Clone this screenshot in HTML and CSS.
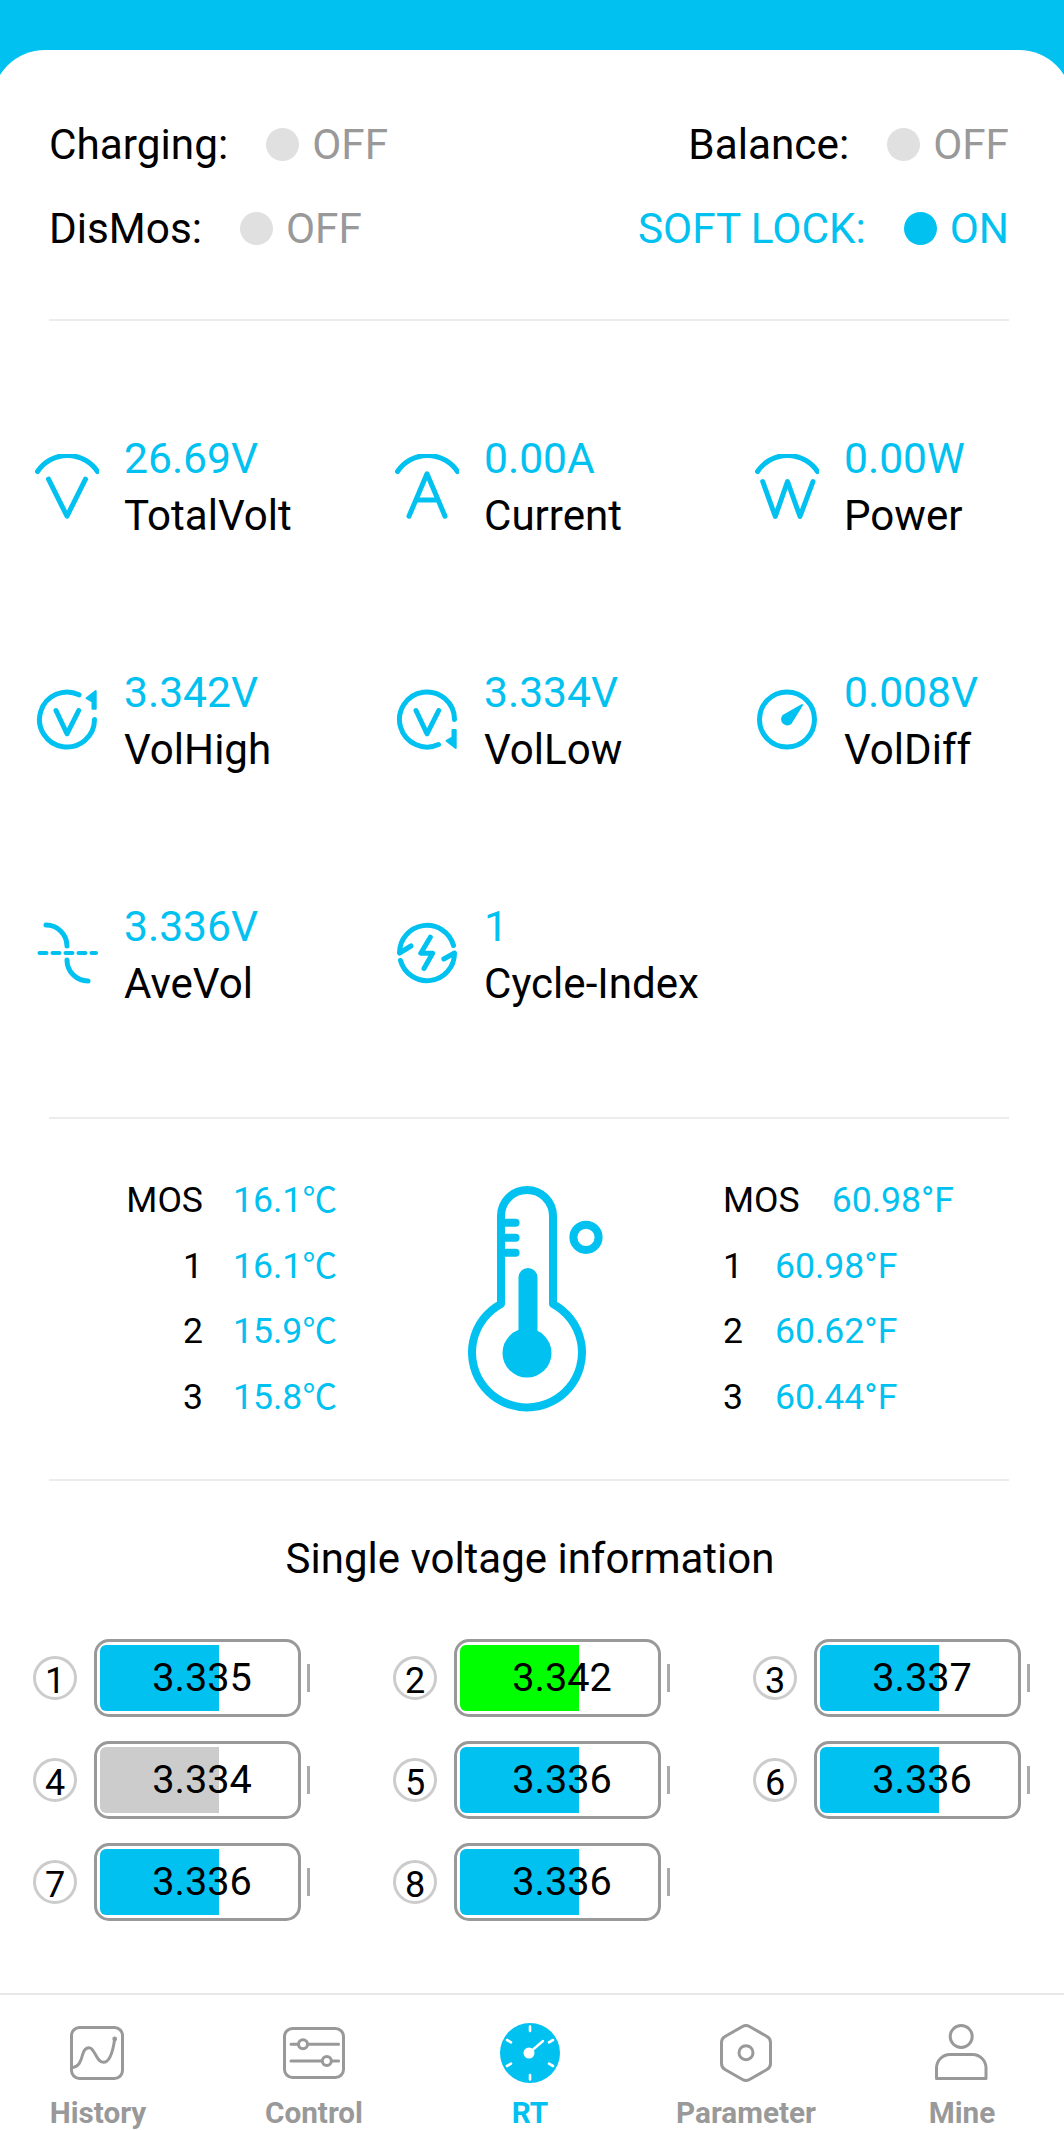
FILE: index.html
```html
<!DOCTYPE html>
<html lang="en">
<head>
    <meta charset="UTF-8">
    <meta name="viewport" content="width=device-width, initial-scale=1.0">
    <title>RT</title>
    <link rel="stylesheet" href="styles.css">
</head>
<body>
<div class="page">
    <div class="top-bar"></div>
    <div class="card">

        <!-- status flags -->
        <section class="status">
            <div class="status-row">
                <div class="flag"><span>Charging:</span><i class="dot"></i><span class="off">OFF</span></div>
                <div class="flag"><span>Balance:</span><i class="dot"></i><span class="off">OFF</span></div>
            </div>
            <div class="status-row">
                <div class="flag"><span>DisMos:</span><i class="dot"></i><span class="off">OFF</span></div>
                <div class="flag on"><span>SOFT LOCK:</span><i class="dot"></i><span>ON</span></div>
            </div>
        </section>

        <!-- main readings -->
        <section class="metrics">
            <div class="metric">
                <svg class="metric-icon" viewBox="0 0 64 66"><path d="M2.5 17.5A36 36 0 0 1 62.5 17.5"/><path d="M13.5 25.2L32 62.2L50.5 25.2"/></svg>
                <div><div class="val">26.69V</div><div class="name">TotalVolt</div></div>
            </div>
            <div class="metric">
                <svg class="metric-icon" viewBox="0 0 64 66"><path d="M2.5 17.5A36 36 0 0 1 62.5 17.5"/><path d="M14 62.2L32 19.8L50 62.2M21 46H43"/></svg>
                <div><div class="val">0.00A</div><div class="name">Current</div></div>
            </div>
            <div class="metric">
                <svg class="metric-icon" viewBox="0 0 64 66"><path d="M2.5 17.5A36 36 0 0 1 62.5 17.5"/><path d="M7.7 27.5L20.3 62.5L32.5 27.5L45 62.5L58 27.5"/></svg>
                <div><div class="val">0.00W</div><div class="name">Power</div></div>
            </div>
            <div class="metric">
                <svg class="metric-icon" viewBox="0 0 64 66"><path d="M44 6.8A27.5 27.5 0 1 0 59.5 31.5"/><path class="solid" d="M51.5 10.2L60.7 3V20.8H57.5V13.5Z"/><path d="M21 22.5L32 45.8L43.7 22.5"/></svg>
                <div><div class="val">3.342V</div><div class="name">VolHigh</div></div>
            </div>
            <div class="metric">
                <svg class="metric-icon" viewBox="0 0 64 66"><path d="M59.5 31.5A27.5 27.5 0 1 0 43.5 56.5"/><path class="solid" d="M51.5 52.8L60.7 60V42H57.5V49.5Z"/><path d="M21 22.5L32 45.8L43.7 22.5"/></svg>
                <div><div class="val">3.334V</div><div class="name">VolLow</div></div>
            </div>
            <div class="metric">
                <svg class="metric-icon" viewBox="0 0 64 66"><circle cx="32" cy="31.5" r="27.5"/><path class="solid" d="M47 17L35.7 35.2A5.3 5.3 0 0 1 28.2 27.8Z"/></svg>
                <div><div class="val">0.008V</div><div class="name">VolDiff</div></div>
            </div>
            <div class="metric">
                <svg class="metric-icon" viewBox="0 0 64 66"><path d="M11 3A21 21 0 0 1 32 24"/><path class="dash" d="M4.5 31H61"/><path d="M32 38A21 21 0 0 0 53 59"/></svg>
                <div><div class="val">3.336V</div><div class="name">AveVol</div></div>
            </div>
            <div class="metric">
                <svg class="metric-icon" viewBox="0 0 64 66"><path d="M16 24L4.5 31A27.5 27.5 0 0 1 58.5 23.5"/><path d="M48.8 37L59.5 31A27.5 27.5 0 0 1 5.5 38.5"/><path d="M35.3 15.2L25.8 31.2H37.6L29 46.5"/></svg>
                <div><div class="val">1</div><div class="name">Cycle-Index</div></div>
            </div>
        </section>

        <!-- temperatures -->
        <section class="temps">
            <div class="temp-c">
                <span class="t-label">MOS</span><span class="val-t">16.1<span class="deg">℃</span></span>
                <span class="t-label">1</span><span class="val-t">16.1<span class="deg">℃</span></span>
                <span class="t-label">2</span><span class="val-t">15.9<span class="deg">℃</span></span>
                <span class="t-label">3</span><span class="val-t">15.8<span class="deg">℃</span></span>
            </div>
            <svg class="thermo" viewBox="0 0 135 226">
                <path d="M33 118V30A26 26 0 0 1 85 30V118A55 55 0 1 1 33 118Z"/>
                <path d="M33 36.7H47.6M33 51.7H47.6M33 66.7H47.6"/>
                <circle cx="118" cy="51.3" r="12.6"/>
                <rect class="solid" x="50.5" y="82" width="19" height="85" rx="9.5"/>
                <circle class="solid" cx="59" cy="167" r="24.5"/>
            </svg>
            <div class="temp-f">
                <div class="t-row"><span>MOS</span><span class="val-t">60.98°F</span></div>
                <div class="t-row"><span>1</span><span class="val-t">60.98°F</span></div>
                <div class="t-row"><span>2</span><span class="val-t">60.62°F</span></div>
                <div class="t-row"><span>3</span><span class="val-t">60.44°F</span></div>
            </div>
        </section>

        <!-- cell voltages -->
        <section class="cells">
            <h2>Single voltage information</h2>
            <div class="cell-grid">
                <div class="cell"><span class="num">1</span><div class="batt"><i class="fill"></i><span>3.335</span></div><i class="tip"></i></div>
                <div class="cell"><span class="num">2</span><div class="batt"><i class="fill high"></i><span>3.342</span></div><i class="tip"></i></div>
                <div class="cell"><span class="num">3</span><div class="batt"><i class="fill"></i><span>3.337</span></div><i class="tip"></i></div>
                <div class="cell"><span class="num">4</span><div class="batt"><i class="fill low"></i><span>3.334</span></div><i class="tip"></i></div>
                <div class="cell"><span class="num">5</span><div class="batt"><i class="fill"></i><span>3.336</span></div><i class="tip"></i></div>
                <div class="cell"><span class="num">6</span><div class="batt"><i class="fill"></i><span>3.336</span></div><i class="tip"></i></div>
                <div class="cell"><span class="num">7</span><div class="batt"><i class="fill"></i><span>3.336</span></div><i class="tip"></i></div>
                <div class="cell"><span class="num">8</span><div class="batt"><i class="fill"></i><span>3.336</span></div><i class="tip"></i></div>
            </div>
        </section>

        <!-- tab bar -->
        <nav class="tabs">
            <div class="tab">
                <svg viewBox="0 0 64 60"><rect x="5.5" y="4.5" width="51" height="51" rx="8"/><path d="M5.5 44.5C13 44 15 38 16.5 32C18 26 20 24.7 23 24.7C29 24.7 30 39.3 37.5 39.3C44 39.3 47 28 48.7 16"/><circle class="solid" cx="48.7" cy="16" r="2.4"/></svg>
                <span>History</span>
            </div>
            <div class="tab">
                <svg viewBox="0 0 64 60"><rect x="2.5" y="5.5" width="59" height="49" rx="8"/><path d="M9 21.3H56.6M9 38H56.6"/><circle class="knob" cx="21" cy="21.3" r="4.5"/><circle class="knob" cx="44.8" cy="38" r="4.5"/></svg>
                <span>Control</span>
            </div>
            <div class="tab active">
                <svg viewBox="0 0 64 60">
                    <circle class="solid" cx="32" cy="30" r="30"/>
                    <path class="mark" d="M32 3.5V8M32 52V56.5M9 17L13 19.3M55 17L51 19.3M9 43L13 40.7M55 43L51 40.7"/>
                    <path class="hand" d="M31 30L45 18"/>
                    <circle class="hub" cx="31" cy="30" r="5.5"/>
                </svg>
                <span>RT</span>
            </div>
            <div class="tab">
                <svg viewBox="0 0 64 60"><path d="M28.5 3.5Q32 1.5 35.5 3.5L53 13.5Q56.5 15.5 56.5 19.5V40.5Q56.5 44.5 53 46.5L35.5 56.5Q32 58.5 28.5 56.5L11 46.5Q7.5 44.5 7.5 40.5V19.5Q7.5 15.5 11 13.5Z"/><circle cx="32" cy="29.7" r="7"/></svg>
                <span>Parameter</span>
            </div>
            <div class="tab">
                <svg viewBox="0 0 64 60"><circle cx="31.2" cy="13.5" r="11"/><path d="M6.5 55.5V45A13.5 13.5 0 0 1 20 31.5H42.5A13.5 13.5 0 0 1 56 45V55.5Z"/></svg>
                <span>Mine</span>
            </div>
        </nav>
    </div>
</div>
</body>
</html>
```

FILE: styles.css
```css
* {
    margin: 0;
    padding: 0;
    box-sizing: border-box;
}

body {
    font-family: Roboto, "Noto Sans CJK SC", sans-serif;
    color: #000;
    background: #fff;
}

.page {
    width: 1064px;
    height: 2130px;
    display: flex;
    flex-direction: column;
    overflow: hidden;
    background: #00c1f0;
}

.top-bar {
    height: 50px;
    flex-shrink: 0;
}

/* card is a bit wider than the window, so the corners get cut off at the edge */
.card {
    flex: 1;
    display: flex;
    flex-direction: column;
    margin: 0 -8px;
    padding: 0 8px;
    background: #fff;
    border-radius: 53px 53px 0 0;
}

/* Status flags */
.status {
    margin: 0 55px 0 49px;
    padding: 52px 0 49px;
    border-bottom: 2px solid #ececec;
    font-size: 42.3px;
}

.status-row {
    height: 84px;
    display: flex;
    justify-content: space-between;
    align-items: center;
}

.flag {
    display: flex;
    align-items: center;
}

.dot {
    width: 33px;
    height: 33px;
    margin: 0 13px 0 38px;
    border-radius: 50%;
    background: #e0e0e0;
}

.off {
    color: #999;
}

.flag.on {
    color: #00c1f0;
}

.flag.on .dot {
    background: #00c1f0;
}

/* Main readings */
.metrics {
    display: grid;
    grid-template-columns: repeat(3, 360px);
    grid-auto-rows: 234px;
    padding: 48.5px 0 47.5px 35px;
    position: relative;
    font-size: 42.1px;
}

.metrics::after {
    content: "";
    position: absolute;
    left: 49px;
    right: 55px;
    bottom: 0;
    height: 2px;
    background: #ececec;
}

.metric {
    display: flex;
    align-items: center;
    gap: 25px;
}

.metric-icon {
    width: 64px;
    height: 66px;
    fill: none;
    stroke: #00c1f0;
    stroke-width: 5;
    stroke-linecap: round;
    stroke-linejoin: round;
}

.metric-icon .solid {
    fill: #00c1f0;
    stroke-width: 2;
}

.metric-icon .dash {
    stroke-width: 4;
    stroke-dasharray: 7 6;
}

.metric .val,
.metric .name {
    line-height: 57px;
}

.val {
    color: #00c1f0;
    font-size: 42.6px;
}

/* Temperatures */
.temps {
    display: flex;
    height: 362px;
    margin: 0 55px 0 49px;
    padding: 49px 0 0 77px;
    border-bottom: 2px solid #ececec;
    font-size: 35.6px;
    line-height: 65.5px;
}

.temp-c {
    width: 207px;
    height: 262px;
    display: grid;
    grid-template-columns: 77px 1fr;
    grid-auto-rows: 65.5px;
    column-gap: 30px;
}

.t-label {
    text-align: right;
    white-space: nowrap;
}

.val-t {
    color: #00c1f0;
    white-space: nowrap;
}

/* the cjk glyph is a touch wider than the original, keep it out of the line height */
.deg {
    font-family: "Noto Sans CJK SC", sans-serif;
    font-size: 34.5px;
    line-height: 0;
}

.thermo {
    width: 135px;
    height: 226px;
    margin: 18px 0 0 135px;
    fill: none;
    stroke: #00c1f0;
    stroke-width: 8;
    stroke-linecap: round;
    stroke-linejoin: round;
}

.thermo .solid {
    fill: #00c1f0;
    stroke: none;
}

.temp-f {
    margin-left: 120px;
}

.t-row {
    display: flex;
    gap: 32px;
}

/* Cell voltages */
.cells {
    padding-top: 48px;
}

.cells h2 {
    font-size: 42px;
    font-weight: 400;
    line-height: 60px;
    text-align: center;
    margin-right: 4px;
}

.cell-grid {
    display: grid;
    grid-template-columns: repeat(3, 360px);
    grid-auto-rows: 78px;
    row-gap: 24px;
    margin-top: 50px;
    padding-left: 33px;
}

.cell {
    display: flex;
    align-items: center;
}

.num {
    width: 44px;
    height: 44px;
    margin-right: 17px;
    padding-top: 3px;
    border: 3px solid #ccc;
    border-radius: 50%;
    font-size: 36px;
    line-height: 38px;
    text-align: center;
}

.batt {
    position: relative;
    width: 207px;
    height: 78px;
    border: 3px solid #999;
    border-radius: 15px;
    font-size: 39.7px;
    line-height: 72px;
    text-align: center;
}

.batt span {
    position: relative;
    padding-left: 9px;
}

.fill {
    position: absolute;
    left: 3px;
    top: 3px;
    width: 119px;
    height: 66px;
    border-radius: 6px 0 0 6px;
    background: #00c1f0;
}

.fill.high {
    background: #00ff00;
}

.fill.low {
    background: #ccc;
}

.tip {
    width: 3px;
    height: 28px;
    margin-left: 6px;
    background: #aaa;
}

/* Tab bar */
.tabs {
    margin-top: auto;
    padding-top: 28px;
    display: grid;
    grid-template-columns: repeat(5, 216px);
    margin-left: -10px;
    width: 1080px;
    height: 137px;
    border-top: 2px solid #e8e8e8;
}

.tab {
    display: flex;
    flex-direction: column;
    align-items: center;
    color: #999;
    font-size: 29.7px;
    font-weight: 700;
    line-height: 34px;
}

.tab svg {
    width: 64px;
    height: 60px;
    margin-bottom: 13px;
    flex-shrink: 0;
    fill: none;
    stroke: #999;
    stroke-width: 3;
    stroke-linecap: round;
    stroke-linejoin: round;
}

.tab svg .solid {
    fill: #999;
    stroke: none;
}

.tab svg .knob {
    fill: #fff;
}

.tab.active {
    color: #00c1f0;
}

.tab.active svg .solid {
    fill: #00c1f0;
}

.tab.active svg .mark {
    stroke: #fff;
    stroke-width: 2.6;
}

.tab.active svg .hand {
    stroke: #fff;
    stroke-width: 2.4;
}

.tab.active svg .hub {
    fill: #fff;
    stroke: none;
}
```
